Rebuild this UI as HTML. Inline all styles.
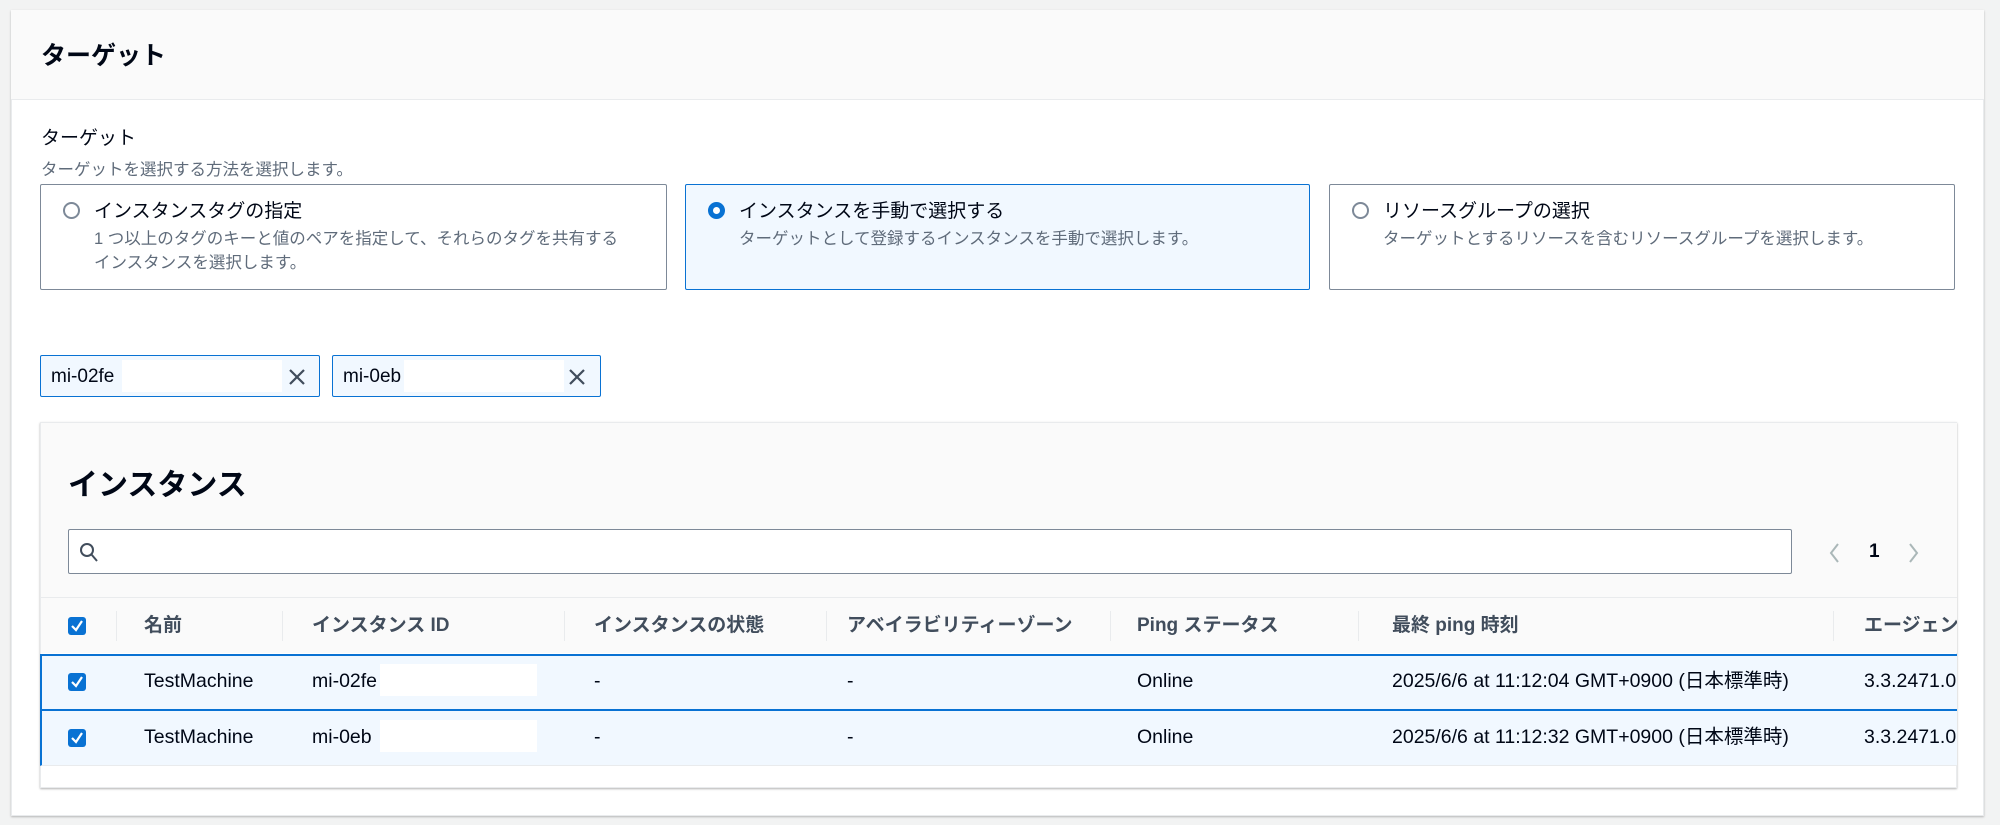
<!DOCTYPE html>
<html><head><meta charset="utf-8"><style>
*{box-sizing:border-box;margin:0;padding:0}
body{width:2000px;height:825px;background:#f2f3f3;font-family:"Liberation Sans","Noto Sans CJK JP",sans-serif;color:#000716;position:relative;overflow:hidden}
.a{position:absolute}
#panel{left:11px;top:10px;width:1973px;height:806px;background:#fff;border:1px solid #e9ebed;box-shadow:0 1px 2px rgba(0,0,0,.25)}
#hdr{left:11px;top:10px;width:1973px;height:90px;background:#fafafa;border-bottom:1px solid #e9ebed}
.card{border:1px solid #7d8998;border-radius:2px;background:#fff;top:184px;height:106px}
.card.sel{border-color:#0972d3;background:#f1f8ff}
.rad{width:17px;height:17px;border-radius:50%;border:2px solid #7d8998;left:22px;top:17px;background:#fff}
.sel .rad{border:5px solid #0972d3}
.ct{left:53px;top:11px;font-size:19px;white-space:nowrap}
.cd{left:53px;top:42px;font-size:16.5px;color:#5f6b7a;line-height:24px;white-space:nowrap}
.tok{top:355px;height:42px;border:1px solid #0972d3;border-radius:2px;background:#f1f8ff}
.tok span{position:absolute;left:10px;top:10px;font-size:19px}
.mask{background:#fff}
.tx{font-size:19.5px;white-space:nowrap;line-height:1}
.th{font-size:19px;font-weight:bold;color:#414d5c;top:616px;white-space:nowrap;line-height:1}
.sep{width:1px;height:30px;top:611px;background:#e9ebed}
.cb{width:18px;height:18px;background:#0972d3;border-radius:3px}
</style></head><body>
<div class="a" id="panel"></div>
<div class="a" id="hdr"></div>
<div class="a" style="left:41px;top:36px;font-size:25px;font-weight:bold">ターゲット</div>
<div class="a" style="left:41px;top:123px;font-size:19px">ターゲット</div>
<div class="a" style="left:41px;top:156px;font-size:16.5px;color:#5f6b7a">ターゲットを選択する方法を選択します。</div>

<div class="a card" style="left:40px;width:627px"><div class="a rad"></div><div class="a ct">インスタンスタグの指定</div><div class="a cd">1 つ以上のタグのキーと値のペアを指定して、それらのタグを共有する<br>インスタンスを選択します。</div></div>
<div class="a card sel" style="left:685px;width:625px"><div class="a rad"></div><div class="a ct">インスタンスを手動で選択する</div><div class="a cd">ターゲットとして登録するインスタンスを手動で選択します。</div></div>
<div class="a card" style="left:1329px;width:626px"><div class="a rad"></div><div class="a ct">リソースグループの選択</div><div class="a cd">ターゲットとするリソースを含むリソースグループを選択します。</div></div>

<div class="a tok" style="left:40px;width:280px"><span>mi-02fe</span><div class="a mask" style="left:81px;top:4px;width:160px;height:32px"></div>
<svg class="a" style="left:246px;top:11px" width="20" height="20"><path d="M3 3L17 17M17 3L3 17" stroke="#414d5c" stroke-width="2.2"/></svg></div>
<div class="a tok" style="left:332px;width:269px"><span>mi-0eb</span><div class="a mask" style="left:71px;top:4px;width:160px;height:32px"></div>
<svg class="a" style="left:234px;top:11px" width="20" height="20"><path d="M3 3L17 17M17 3L3 17" stroke="#414d5c" stroke-width="2.2"/></svg></div>

<div class="a" style="left:40px;top:422px;width:1917px;height:366px;background:#fff;border:1px solid #e9ebed;box-shadow:0 1px 2px rgba(0,0,0,.3)"></div>
<div class="a" style="left:41px;top:423px;width:1916px;height:230px;background:#fafafa"></div>
<div class="a" style="left:68px;top:460px;font-size:30px;font-weight:bold">インスタンス</div>
<div class="a" style="left:68px;top:529px;width:1724px;height:45px;background:#fff;border:1px solid #7d8998;border-radius:2px"></div>
<svg class="a" style="left:79px;top:542px" width="20" height="22"><circle cx="8" cy="8" r="6" fill="none" stroke="#414d5c" stroke-width="2"/><path d="M12.5 12.5L18 19" stroke="#414d5c" stroke-width="2"/></svg>
<svg class="a" style="left:1828px;top:542px" width="14" height="22"><path d="M10 2L3 11L10 20" fill="none" stroke="#aab7b8" stroke-width="2"/></svg>
<div class="a" style="left:1869px;top:541px;font-size:19px;font-weight:bold">1</div>
<svg class="a" style="left:1906px;top:542px" width="14" height="22"><path d="M4 2L11 11L4 20" fill="none" stroke="#aab7b8" stroke-width="2"/></svg>
<div class="a" style="left:41px;top:597px;width:1916px;height:1px;background:#e9ebed"></div>

<div class="a cb" style="left:68px;top:617px"></div>
<svg class="a" style="left:68px;top:617px" width="18" height="18"><path d="M4 9L8 13L14 4" fill="none" stroke="#fff" stroke-width="2.2"/></svg>
<div class="a sep" style="left:116px"></div><div class="a sep" style="left:282px"></div><div class="a sep" style="left:564px"></div><div class="a sep" style="left:826px"></div><div class="a sep" style="left:1110px"></div><div class="a sep" style="left:1358px"></div><div class="a sep" style="left:1833px"></div>
<div class="a th" style="left:144px">名前</div>
<div class="a th" style="left:312px">インスタンス ID</div>
<div class="a th" style="left:594px">インスタンスの状態</div>
<div class="a th" style="left:847px">アベイラビリティーゾーン</div>
<div class="a th" style="left:1137px">Ping ステータス</div>
<div class="a th" style="left:1392px">最終 ping 時刻</div>
<div class="a th" style="left:1864px;width:93px;overflow:hidden">エージェント</div>

<div class="a" style="left:40px;top:654px;width:1917px;height:112px;background:#f1f8ff;border-top:2px solid #0972d3;border-bottom:1px solid #e9ebed;border-left:2px solid #0972d3"></div>
<div class="a" style="left:40px;top:709px;width:1917px;height:2px;background:#0972d3"></div>

<div class="a cb" style="left:68px;top:673px"></div>
<svg class="a" style="left:68px;top:673px" width="18" height="18"><path d="M4 9L8 13L14 4" fill="none" stroke="#fff" stroke-width="2.2"/></svg>
<div class="a tx" style="left:144px;top:672px">TestMachine</div>
<div class="a tx" style="left:312px;top:672px">mi-02fe</div>
<div class="a mask" style="left:380px;top:664px;width:157px;height:32px"></div>
<div class="a tx" style="left:594px;top:672px">-</div>
<div class="a tx" style="left:847px;top:672px">-</div>
<div class="a tx" style="left:1137px;top:672px">Online</div>
<div class="a tx" style="left:1392px;top:672px">2025/6/6 at 11:12:04 GMT+0900 (日本標準時)</div>
<div class="a tx" style="left:1864px;top:672px;width:93px;overflow:hidden">3.3.2471.0</div>

<div class="a cb" style="left:68px;top:729px"></div>
<svg class="a" style="left:68px;top:729px" width="18" height="18"><path d="M4 9L8 13L14 4" fill="none" stroke="#fff" stroke-width="2.2"/></svg>
<div class="a tx" style="left:144px;top:728px">TestMachine</div>
<div class="a tx" style="left:312px;top:728px">mi-0eb</div>
<div class="a mask" style="left:380px;top:720px;width:157px;height:32px"></div>
<div class="a tx" style="left:594px;top:728px">-</div>
<div class="a tx" style="left:847px;top:728px">-</div>
<div class="a tx" style="left:1137px;top:728px">Online</div>
<div class="a tx" style="left:1392px;top:728px">2025/6/6 at 11:12:32 GMT+0900 (日本標準時)</div>
<div class="a tx" style="left:1864px;top:728px;width:93px;overflow:hidden">3.3.2471.0</div>
</body></html>
